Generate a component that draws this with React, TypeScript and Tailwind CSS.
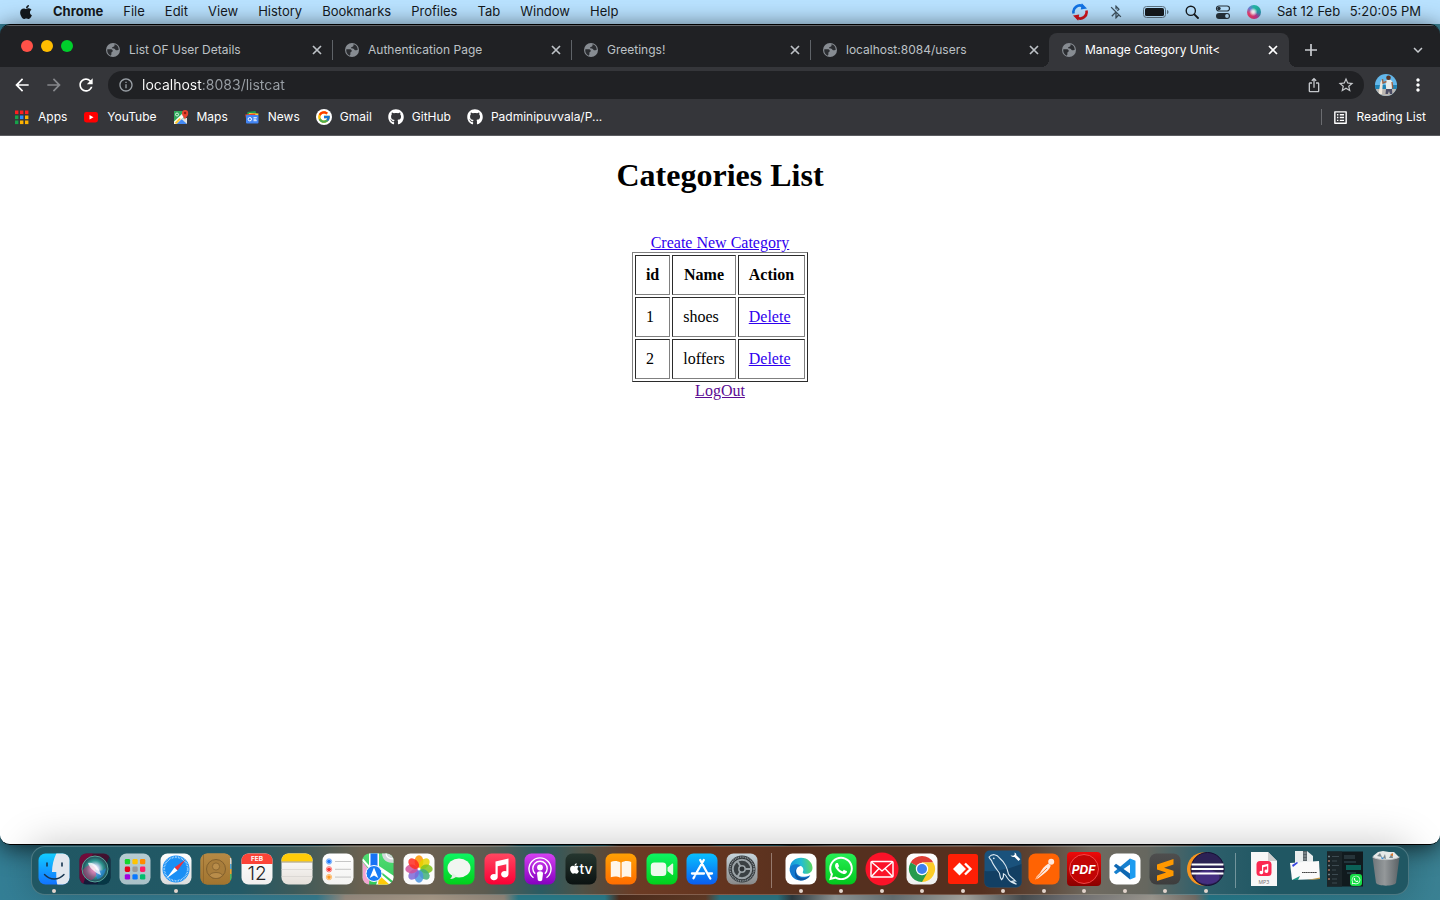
import type { ReactNode } from "react";
import { FaApple, FaGithub, FaWhatsapp } from "react-icons/fa";
import { FcGoogle } from "react-icons/fc";
import {
  MdArrowBack,
  MdArrowForward,
  MdBluetoothDisabled,
  MdExpandMore,
  MdInfoOutline,
  MdIosShare,
  MdListAlt,
  MdMoreVert,
  MdRefresh,
  MdStarBorder,
} from "react-icons/md";

/* ---------- menu bar ---------- */

const menus = ["File", "Edit", "View", "History", "Bookmarks", "Profiles", "Tab", "Window", "Help"];

function SyncIcon() {
  return (
    <svg viewBox="0 0 18 18" className="size-[18px]" fill="none" strokeWidth="2.6">
      <path d="M2.6 10.5A6.4 6.4 0 0 1 12 3.4" stroke="#1173e6" />
      <path d="M10.8.2 16 5.6l-6.2.9z" fill="#1173e6" />
      <path d="M15.4 7.5A6.4 6.4 0 0 1 6 14.6" stroke="#d3141c" />
      <path d="M7.2 17.8 2 12.4l6.2-.9z" fill="#d3141c" />
    </svg>
  );
}

function BatteryIcon() {
  return (
    <svg viewBox="0 0 26 12" className="h-3 w-[26px]">
      <rect x=".5" y=".5" width="22" height="11" rx="3" fill="none" stroke="#5c7383" />
      <rect x="2" y="2" width="19" height="8" rx="1.6" fill="#15191d" />
      <path d="M24 4v4c1-.3 1.5-1 1.5-2s-.5-1.7-1.5-2z" fill="#5c7383" />
    </svg>
  );
}

function SearchGlyph() {
  return (
    <svg viewBox="0 0 14 14" className="size-3.5" fill="none" stroke="#15191d" strokeLinecap="round">
      <circle cx="5.8" cy="5.8" r="4.6" strokeWidth="1.4" />
      <path d="M9.3 9.3 13 13" strokeWidth="1.8" />
    </svg>
  );
}

function ControlCenterIcon() {
  return (
    <svg viewBox="0 0 16 14" className="h-3.5 w-4">
      <rect x="1.5" y="1" width="13" height="5" rx="2.5" fill="none" stroke="#26323b" strokeWidth="1.2" />
      <circle cx="4" cy="3.5" r="1.7" fill="#26323b" />
      <rect x="1" y="8" width="14" height="6" rx="3" fill="#26323b" />
      <circle cx="12" cy="11" r="1.9" fill="#b9e2ff" />
    </svg>
  );
}

function SiriMini() {
  return (
    <span className="size-3.5 rounded-full bg-[radial-gradient(circle_at_45%_50%,#ffffff_0%,#ffffffcc_16%,transparent_40%),conic-gradient(from_0deg,#21b8a8,#1fae9c,#2f8fb0,#d0349a,#ee3f72,#ee3f72,#6a7fd8,#21b8a8)]" />
  );
}

function MenuBar() {
  return (
    <header className="flex h-6 shrink-0 items-center justify-between bg-[#b9e2ff] px-[19px] text-[13px] text-[#15191d]">
      <nav className="flex items-center gap-5">
        <button type="button" aria-label="Apple menu" className="flex w-3.5 justify-center">
          <FaApple className="size-4" />
        </button>
        <button type="button" className="font-bold">
          Chrome
        </button>
        {menus.map((m) => (
          <button type="button" key={m}>
            {m}
          </button>
        ))}
      </nav>
      <div className="flex items-center gap-4">
        <SyncIcon />
        <span className="flex w-[22px] justify-center">
          <MdBluetoothDisabled className="size-4 text-[#3f5361]" />
        </span>
        <BatteryIcon />
        <SearchGlyph />
        <ControlCenterIcon />
        <SiriMini />
        <time className="flex w-36 justify-between whitespace-nowrap">
          <span>Sat 12 Feb</span>
          <span>5:20:05 PM</span>
        </time>
      </div>
    </header>
  );
}

/* ---------- browser chrome ---------- */

const tabs = ["List OF User Details", "Authentication Page", "Greetings!", "localhost:8084/users", "Manage Category Unit<"];

function Globe() {
  return (
    <svg viewBox="0 0 14 14" className="size-3.5 shrink-0">
      <circle cx="7" cy="7" r="7" fill="#878c92" />
      <path
        d="M1.3 6.300h3.300c1.300 0 2 .6 2.200 1.500.1.900-.9 1-1.300 1.600-.4.700.2 1.300-.2 2.300l-.6 1A6 6 0 0 1 1.300 6.300z M8.600 1.300c-.3 1.200.3 1.500-.6 2.200-.8.500-1.900.3-1.900 1.300 0 1.100 1.500.8 2.300.9.900.1.800 1.300 1.700 1.500.9.200 1.300-.4 2.600-.2a5.800 5.800 0 0 0-4.100-5.700z"
        fill="#2b2d31"
      />
    </svg>
  );
}

function CloseGlyph() {
  return (
    <svg viewBox="0 0 16 16" className="size-4" fill="none" stroke="currentColor" strokeWidth="1.7">
      <path d="m4 4 8 8M12 4l-8 8" />
    </svg>
  );
}

function PlusGlyph() {
  return (
    <svg viewBox="0 0 16 16" className="size-4" fill="none" stroke="currentColor" strokeWidth="1.7">
      <path d="M8 2v12M2 8h12" />
    </svg>
  );
}

function TabStrip() {
  return (
    <div className="flex h-[42px] items-end border-t border-[#626366] bg-[#202124] text-[12px]">
      <div className="mb-[15px] flex w-[93px] shrink-0 gap-2 pl-[21px]">
        <button type="button" aria-label="Close window" className="size-3 rounded-full bg-[#ff5148]" />
        <button type="button" aria-label="Minimise window" className="size-3 rounded-full bg-[#ffbd00]" />
        <button type="button" aria-label="Zoom window" className="size-3 rounded-full bg-[#00cf2c]" />
      </div>
      <div role="tablist" className="flex min-w-0">
        {tabs.map((title, i) => {
          const active = i === tabs.length - 1;
          return (
            <div
              key={title}
              className={
                active
                  ? "relative flex h-[34px] w-60 min-w-0 items-center rounded-t-lg bg-[#35363a] pr-2 pl-[13px] text-white"
                  : "relative flex h-[34px] w-[239px] min-w-0 items-center pr-[7px] pl-[13px] text-[#bdc1c6]"
              }
            >
              <button type="button" role="tab" aria-selected={active} className="flex min-w-0 flex-1 items-center gap-[9px] text-left">
                <Globe />
                <span className="truncate">{title}</span>
              </button>
              <button type="button" aria-label={`Close ${title}`} className="flex size-4 items-center justify-center">
                <CloseGlyph />
              </button>
              {i < tabs.length - 2 && <span className="absolute top-[7px] -right-px h-5 w-px bg-[#5f6368]" />}
              {active && (
                <>
                  <span className="absolute bottom-0 -left-2 size-2 bg-[radial-gradient(circle_at_0_0,transparent_8px,#35363a_8px)]" />
                  <span className="absolute -right-2 bottom-0 size-2 bg-[radial-gradient(circle_at_100%_0,transparent_8px,#35363a_8px)]" />
                </>
              )}
            </div>
          );
        })}
      </div>
      <button type="button" aria-label="New tab" className="ml-[6px] flex h-[34px] w-8 items-center justify-center text-[#c9ccd0]">
        <PlusGlyph />
      </button>
      <button type="button" aria-label="Search tabs" className="mr-[6px] ml-auto flex h-[34px] w-8 items-center justify-center text-[#c9ccd0]">
        <MdExpandMore className="size-[18px]" />
      </button>
    </div>
  );
}

function IconButton({ label, children }: { label: string; children: ReactNode }) {
  return (
    <button type="button" aria-label={label} className="flex size-8 shrink-0 items-center justify-center">
      {children}
    </button>
  );
}

function Avatar() {
  return (
    <svg viewBox="0 0 22 22" className="size-[22px] rounded-full">
      <rect width="22" height="22" fill="#63b7ea" />
      <rect y="11" width="22" height="5" fill="#1f83b5" />
      <rect y="15" width="22" height="7" fill="#b9b5b0" />
      <path d="M3.500 20 5.500 8l2-3 .5 1-1 14z" fill="#eee6da" />
      <path d="m10.500 7 1.500-1h4l1.500 2-.8 7.500h-5.500z" fill="#e9ece9" />
      <path d="M11.500 7.500 8 9 7.500 5M17 8l.8 6.500" stroke="#9b6245" strokeWidth="1.400" fill="none" />
      <circle cx="13.500" cy="3.800" r="2.300" fill="#5a3423" />
      <path d="M11 15h6l.3 5h-2.300l-1-3-1.200 3h-2.300z" fill="#4b4c63" />
    </svg>
  );
}

function Toolbar() {
  return (
    <div className="flex h-9 items-center bg-[#35363a] px-[6px] text-white">
      <IconButton label="Back">
        <MdArrowBack className="size-5" />
      </IconButton>
      <span className="text-[#85878b]">
        <IconButton label="Forward">
          <MdArrowForward className="size-5" />
        </IconButton>
      </span>
      <IconButton label="Reload">
        <MdRefresh className="size-5" />
      </IconButton>
      <div className="mx-[6px] flex h-7 min-w-0 flex-1 items-center rounded-full bg-[#202124] pr-[2px] pl-2">
        <button type="button" aria-label="Site information" className="mr-[6px] flex w-5 shrink-0 justify-center text-[#9aa0a6]">
          <MdInfoOutline className="size-4" />
        </button>
        <input
          aria-label="Address and search bar"
          defaultValue="localhost:8083/listcat"
          className="h-7 min-w-0 flex-1 bg-[linear-gradient(to_right,#ffffff_61px,#9aa0a6_61px)] bg-clip-text pb-[2px] text-[14px] text-transparent outline-none"
        />
        <span className="flex text-[#c4c7cb]">
          <IconButton label="Share this page">
            <MdIosShare className="size-4" />
          </IconButton>
          <IconButton label="Bookmark this tab">
            <MdStarBorder className="size-[18px]" />
          </IconButton>
        </span>
      </div>
      <IconButton label="Profile">
        <Avatar />
      </IconButton>
      <IconButton label="Browser menu">
        <MdMoreVert className="size-5" />
      </IconButton>
    </div>
  );
}

const appCells = ["#ff1f1f", "#ff1f1f", "#ff1f1f", "#16a34a", "#2f8cff", "#ffb300", "#16a34a", "#ffb300", "#ffb300"];

function AppsIcon() {
  return (
    <svg viewBox="0 0 16 16" className="size-4">
      {appCells.map((c, i) => (
        <rect key={i} x={1 + (i % 3) * 5} y={1.5 + Math.floor(i / 3) * 5} width="3.400" height="3.600" fill={c} />
      ))}
    </svg>
  );
}

function YouTubeIcon() {
  return (
    <svg viewBox="0 0 16 16" className="size-4">
      <rect x="1" y="3" width="14" height="10.500" rx="2.400" fill="#ff0000" />
      <path d="M6.500 6v4.600l4-2.300z" fill="#fff" />
    </svg>
  );
}

function MapsIcon() {
  return (
    <svg viewBox="0 0 16 16" className="size-4">
      <path d="M1 2h12v13H1z" fill="#2fa85a" />
      <path d="M3.500 15 8.500 9l5.500 6z" fill="#4389f5" />
      <path d="M1 12.500 10.500 3.500l1.500 3.500L3.500 15H1z" fill="#fbfbfb" />
      <path d="m8 9.500 6 5.500V9z" fill="#e4e4e4" />
      <path d="m1.500 14 5-5 1.500 1-4.500 5z" fill="#fdc72f" />
      <circle cx="4" cy="5.500" r="1.500" fill="none" stroke="#fff" strokeWidth=".8" />
      <path d="M12 11c0-2.500-3-3.400-3-6.800a3.100 3.100 0 0 1 6.200 0C15.200 7.600 12 8.500 12 11z" fill="#e8432f" />
      <circle cx="12.100" cy="4" r="1.200" fill="#8c1f14" />
    </svg>
  );
}

function NewsIcon() {
  return (
    <svg viewBox="0 0 16 16" className="size-4">
      <path d="m3.500 3 8-1 1 4H3z" fill="#1e9e4a" />
      <path d="m5 4 9.500.5-.8 5H4z" fill="#fcc934" />
      <path d="m1.200 5.500 10-1 .5 5H2z" fill="#e8432f" />
      <rect x="2" y="6" width="12.500" height="8.500" rx="1" fill="#4285f4" />
      <circle cx="5.800" cy="10.200" r="1.700" fill="none" stroke="#fff" />
      <path d="M9.500 8.700h3.300M9.500 10.200h2.800M9.500 11.700h3.300" stroke="#fff" strokeWidth=".9" />
    </svg>
  );
}

const bookmarks: { label: string; icon: ReactNode }[] = [
  { label: "Apps", icon: <AppsIcon /> },
  { label: "YouTube", icon: <YouTubeIcon /> },
  { label: "Maps", icon: <MapsIcon /> },
  { label: "News", icon: <NewsIcon /> },
  {
    label: "Gmail",
    icon: (
      <span className="flex size-4 items-center justify-center rounded-full bg-white">
        <FcGoogle className="size-3.5" />
      </span>
    ),
  },
  { label: "GitHub", icon: <FaGithub className="size-4" /> },
  { label: "Padminipuvvala/P...", icon: <FaGithub className="size-4" /> },
];

function BookmarksBar() {
  return (
    <div className="border-b border-[#5b5c60] bg-[#35363a] px-[14px] pb-1 text-[12px] text-white">
      <nav className="flex h-7 items-center gap-4">
        {bookmarks.map((b) => (
          <a key={b.label} href="#" className="flex items-center gap-2 whitespace-nowrap">
            {b.icon}
            {b.label}
          </a>
        ))}
        <button type="button" className="ml-auto flex h-4 items-center gap-2 border-l border-[#6b6c70] pl-[10px] whitespace-nowrap">
          <MdListAlt className="size-[17px]" />
          Reading List
        </button>
      </nav>
    </div>
  );
}

/* ---------- page ---------- */

const categories = [
  { id: 1, name: "shoes" },
  { id: 2, name: "loffers" },
];

const cell = "border border-t-[#2b2b2b] border-r-[#808080] border-b-[#808080] border-l-[#2b2b2b] p-[10px]";
const link = "text-[#2f00ee] underline";

function CategoriesPage() {
  return (
    <main className="flex flex-1 flex-col items-center bg-white pt-[21px] font-['Liberation_Serif',serif] text-[16px] leading-[18px] text-black">
      <h1 className="mb-10 text-[32px] leading-[37px] font-bold">Categories List</h1>
      <a href="#" className={link}>
        Create New Category
      </a>
      <table className="border-separate border-spacing-[2px] border border-t-[#808080] border-r-[#2b2b2b] border-b-[#2b2b2b] border-l-[#808080]">
        <thead>
          <tr>
            <th className={cell}>id</th>
            <th className={cell}>Name</th>
            <th className={cell}>Action</th>
          </tr>
        </thead>
        <tbody>
          {categories.map((c) => (
            <tr key={c.id}>
              <td className={cell}>{c.id}</td>
              <td className={cell}>{c.name}</td>
              <td className={cell}>
                <a href="#" className={link}>
                  Delete
                </a>
              </td>
            </tr>
          ))}
        </tbody>
      </table>
      <a href="#" className="text-[#5b0b92] underline">
        LogOut
      </a>
    </main>
  );
}

/* ---------- dock ---------- */

function Tile({ id, from, to, children }: { id: string; from: string; to: string; children?: ReactNode }) {
  return (
    <svg viewBox="0 0 32 32" className="size-8 shrink-0 overflow-visible">
      <defs>
        <linearGradient id={id} x1="0" y1="0" x2="0" y2="1">
          <stop offset="0" stopColor={from} />
          <stop offset="1" stopColor={to} />
        </linearGradient>
        <clipPath id={`${id}-clip`}>
          <rect x=".5" y=".5" width="31" height="31" rx="7" />
        </clipPath>
      </defs>
      <rect x=".5" y=".5" width="31" height="31" rx="7" fill={`url(#${id})`} />
      <g clipPath={`url(#${id}-clip)`}>{children}</g>
    </svg>
  );
}

function Free({ children }: { children: ReactNode }) {
  return (
    <svg viewBox="0 0 32 32" className="size-8 shrink-0 overflow-visible">
      {children}
    </svg>
  );
}

const launchpad = ["#15d52c", "#ffc400", "#ff8a00", "#e8001c", "#9a9a9a", "#ff1d68", "#a100e0", "#0a78ff", "#00bd6d"];
const petals = ["#ff9500", "#e6d200", "#7fc41c", "#3fae7a", "#4a94e0", "#7d68d8", "#d0509a", "#ff2a20"];

type DockApp = { name: string; running?: boolean; icon: ReactNode };

const systemApps: DockApp[] = [
  {
    name: "Finder",
    running: true,
    icon: (
      <Tile id="finder" from="#12cdff" to="#1273ff">
        <path d="M18.500 0H32v32H19.500c-1-3.500-1.300-6.500-1.200-13H14C14 13 15.500 6 18.500 0z" fill="#e2e7ee" />
        <path d="M9 10v3M24 10v3" stroke="#16344f" strokeWidth="1.600" strokeLinecap="round" />
        <path d="M6.500 21.500c5.500 6 14 6 19.500 0" fill="none" stroke="#16344f" strokeWidth="1.400" strokeLinecap="round" />
      </Tile>
    ),
  },
  {
    name: "Siri",
    icon: (
      <Tile id="siri" from="#45102f" to="#101c3a">
        <defs>
          <radialGradient id="siri-orb">
            <stop offset="0" stopColor="#ffffff" />
            <stop offset=".3" stopColor="#c9d4f0" />
            <stop offset=".65" stopColor="#2a938d" />
            <stop offset="1" stopColor="#24404f" />
          </radialGradient>
        </defs>
        <path d="M0 0h14L4 32H0z" fill="#86093f" opacity=".7" />
        <path d="M32 0v32H18z" fill="#033e49" opacity=".8" />
        <circle cx="16" cy="16" r="13" fill="url(#siri-orb)" />
        <path d="M4 17c5-7 10-6 13-1 2 5-1 10-5 11-5-1-8-5-8-10z" fill="#d12c72" opacity=".5" />
        <path d="M16 16c4 3 8 2 11-1-1 7-5 11-9 11z" fill="#267fe2" opacity=".6" />
        <path d="M9 10c6-1 10 3 13 12-5-2-11-6-13-12z" fill="#fff" opacity=".75" />
        <circle cx="16" cy="16" r="13" fill="none" stroke="#63c0ad" strokeWidth=".8" />
      </Tile>
    ),
  },
  {
    name: "Launchpad",
    icon: (
      <Tile id="launchpad" from="#b7ccd2" to="#a9c0c7">
        {launchpad.map((c, i) => (
          <rect key={i} x={5.8 + (i % 3) * 7.6} y={6 + Math.floor(i / 3) * 7.6} width="5.300" height="5.300" rx="1.300" fill={c} />
        ))}
      </Tile>
    ),
  },
  {
    name: "Safari",
    running: true,
    icon: (
      <Tile id="safari" from="#ffffff" to="#dcdcdc">
        <circle cx="16" cy="16" r="13.500" fill="#1a8ff5" />
        <circle cx="16" cy="16" r="11.800" fill="none" stroke="#d7efff" strokeWidth="1.800" strokeDasharray=".6 .95" />
        <path d="M25.500 6.500 14.500 14.500l3 3z" fill="#f0323a" />
        <path d="M6.500 25.500 14.500 14.500l3 3z" fill="#fff" />
      </Tile>
    ),
  },
  {
    name: "Contacts",
    icon: (
      <Tile id="contacts" from="#b68a45" to="#a1742f">
        <rect x="29" y="5" width="3" height="6" fill="#d8d8d8" />
        <rect x="29" y="11" width="3" height="5" fill="#52a9da" />
        <rect x="29" y="16" width="3" height="5" fill="#e8a233" />
        <rect x="29" y="21" width="3" height="6" fill="#49b866" />
        <rect x="0" y="0" width="30" height="32" rx="6" fill="url(#contacts)" />
        <path d="M3.500 0v32" stroke="#8f652a" strokeWidth=".8" />
        <circle cx="16" cy="16" r="9.500" fill="#a87d3b" stroke="#82602e" />
        <circle cx="16" cy="13.500" r="3.600" fill="#b98d4a" stroke="#82602e" strokeWidth=".8" />
        <path d="M9.500 22.500c1-4 12-4 13 0-3.500 4-9.500 4-13 0z" fill="#b98d4a" stroke="#82602e" strokeWidth=".8" />
      </Tile>
    ),
  },
  {
    name: "Calendar",
    icon: (
      <Tile id="calendar" from="#ffffff" to="#f1efee">
        <rect width="32" height="11" fill="#fc4438" />
        <text x="16" y="8.300" textAnchor="middle" fontSize="6.500" fontWeight="bold" fill="#fff">FEB</text>
        <text x="16" y="26.500" textAnchor="middle" fontSize="19" fontWeight="300" fill="#252525">12</text>
      </Tile>
    ),
  },
  {
    name: "Notes",
    icon: (
      <Tile id="notes" from="#ffffff" to="#e5e0da">
        <rect width="32" height="8.500" fill="#ffcc08" />
        <path d="M0 9h32" stroke="#8c7d52" strokeWidth=".8" />
        <path d="M0 16.500h32M0 23.500h32" stroke="#d5d2ce" strokeWidth=".7" />
      </Tile>
    ),
  },
  {
    name: "Reminders",
    icon: (
      <Tile id="reminders" from="#ffffff" to="#f3f3f1">
        {["#1b7bff", "#ff3434", "#ff9820"].map((c, i) => (
          <g key={c}>
            <circle cx="7" cy={8.5 + i * 7.8} r="2.700" fill="none" stroke={c} strokeWidth=".6" />
            <circle cx="7" cy={8.5 + i * 7.8} r="1.900" fill={c} />
            <path d={["M13 8.500h16", "M13 16.300h16", "M13 24.100h16"][i]} stroke="#bfbfbf" strokeWidth=".9" />
          </g>
        ))}
      </Tile>
    ),
  },
  {
    name: "Maps",
    icon: (
      <Tile id="maps" from="#50dc72" to="#33c85b">
        <path d="M0 8 8 18l-1 14H0z" fill="#f3a4d1" />
        <path d="M7 0h10v20H7z" fill="#fff" />
        <path d="M8.500 0h7v20h-7z" fill="#1672f4" />
        <path d="M18 20 32 32H14z" fill="#fff" />
        <path d="m17 22 11 10H16z" fill="#ffca0a" />
        <path d="m17 13 15 10v6L17 17z" fill="#fff" />
        <path d="M20 0c0 7 5 10 12 10V0z" fill="#d3d8da" />
        <path d="M24 0c0 4 3 6 8 6" fill="none" stroke="#fff" strokeWidth="1.200" />
        <path d="M0 6 8 15" stroke="#fff" strokeWidth="2" />
        <circle cx="12" cy="20.500" r="8" fill="#187cf5" stroke="#fff" />
        <path d="m12 14.500 4.300 10.500-4.300-2.600L7.700 25z" fill="#fff" />
      </Tile>
    ),
  },
  {
    name: "Photos",
    icon: (
      <Tile id="photos" from="#ffffff" to="#fafafa">
        {petals.map((c, i) => (
          <ellipse key={c} cx="16" cy="8.500" rx="4.400" ry="6.200" fill={c} opacity=".85" transform={`rotate(${i * 45} 16 16)`} />
        ))}
      </Tile>
    ),
  },
  {
    name: "Messages",
    icon: (
      <Tile id="messages" from="#0df562" to="#02cf1b">
        <ellipse cx="16" cy="15" rx="11.500" ry="9.500" fill="#f1f6f1" />
        <path d="M9 20c.5 3-.5 5-2 6 3 0 5-1 7-3z" fill="#e3eee3" />
      </Tile>
    ),
  },
  {
    name: "Music",
    icon: (
      <Tile id="music" from="#ff4761" to="#fb0035">
        <path d="M11.500 8.500 24.500 5.500v15.800a3.700 3.200 0 1 1-2.200-3v-7L13.700 13.200v11a3.700 3.200 0 1 1-2.200-3z" fill="#fff" />
      </Tile>
    ),
  },
  {
    name: "Podcasts",
    icon: (
      <Tile id="podcasts" from="#d440f2" to="#8500bf">
        <g fill="none" stroke="#fff" strokeWidth="1.400">
          <path d="M9.500 24.700a11 11 0 1 1 13 0" />
          <path d="M11.200 20.800a7.200 7.200 0 1 1 9.600 0" />
        </g>
        <circle cx="16" cy="14.500" r="2.900" fill="#fff" />
        <path d="M13 20.500c0-3 6-3 6 0L18.200 27c-.3 1.500-4.100 1.500-4.400 0z" fill="#fff" />
      </Tile>
    ),
  },
  {
    name: "TV",
    icon: (
      <Tile id="tv" from="#25362f" to="#0b1211">
        <FaApple x="3.500" y="9.500" size="12" color="#fff" />
        <text x="14.500" y="21" fontSize="14" fontWeight="500" fill="#fff">tv</text>
      </Tile>
    ),
  },
  {
    name: "Books",
    icon: (
      <Tile id="books" from="#ffa004" to="#ff6d00">
        <path d="M15.400 9.500C13 7.800 8.500 7.500 5.800 9v15.300c3-1.300 7-1.200 9.600.5zM16.600 9.500c2.400-1.700 6.900-2 9.600-.5v15.300c-3-1.300-7-1.200-9.600.5z" fill="#fff6ea" />
      </Tile>
    ),
  },
  {
    name: "FaceTime",
    icon: (
      <Tile id="facetime" from="#0df562" to="#02cf1b">
        <rect x="4.800" y="9.500" width="15.500" height="13.500" rx="3.500" fill="#eefaee" />
        <path d="m21.500 14.500 4.500-3.700c.6-.4 1.200-.2 1.200.6v9.700c0 .8-.6 1-1.200.6l-4.500-3.700z" fill="#e4f6e4" />
      </Tile>
    ),
  },
  {
    name: "App Store",
    icon: (
      <Tile id="appstore" from="#08c0ff" to="#0b5df0">
        <g stroke="#fff" strokeWidth="2.300" strokeLinecap="round" fill="none">
          <path d="m17.800 7-8.300 14.500M14.200 7l8.900 16.500 1.200 2M6 20.500h12M22.500 20.500H26M8.500 23.500l-1 1.700" />
        </g>
      </Tile>
    ),
  },
  {
    name: "System Preferences",
    icon: (
      <Tile id="settings" from="#c5d4db" to="#898989">
        <circle cx="16" cy="16" r="13.500" fill="#33383b" />
        <circle cx="16" cy="16" r="12" fill="none" stroke="#8b9398" strokeWidth="1.600" strokeDasharray="1 .8" />
        <circle cx="16" cy="16" r="9.300" fill="#3a4043" stroke="#9aa2a6" strokeWidth="2" />
        <path d="M17.500 16H25M15.200 14.700 11.500 8.200M15.200 17.300l-3.700 6.500" stroke="#9aa2a6" strokeWidth="1.900" />
        <circle cx="16" cy="16" r="3.200" fill="#2c3134" stroke="#9aa2a6" strokeWidth="1.500" />
      </Tile>
    ),
  },
];

const userApps: DockApp[] = [
  {
    name: "Microsoft Edge",
    running: true,
    icon: (
      <Tile id="edge" from="#ffffff" to="#ffffff">
        <defs>
          <linearGradient id="edge-a" x1="0" y1=".3" x2="1" y2=".2">
            <stop offset="0" stopColor="#1596dc" />
            <stop offset=".5" stopColor="#22bdd3" />
            <stop offset="1" stopColor="#62da55" />
          </linearGradient>
        </defs>
        <path d="M4.800 15C5.500 8.500 10 4.800 16 4.800c7 0 11.500 5 11.500 10 0 4-3 6-6.500 6-2.500 0-4-.8-3-2.400 1.200-2.500-.5-6-4.500-6-5 0-8 3-8.700 6.600z" fill="url(#edge-a)" />
        <path d="M4.800 15c1.500-4 8-5 11-2-3.300.5-5 3-4.500 6 .7 4 6 6.800 14 3.200C23 26 19.500 27.500 16 27.500 8.500 27.500 4.300 21.500 4.800 15z" fill="#1379cf" />
        <path d="M12 14.500c-2 3-1.500 8 3 10 3 1.400 7 .5 10.300-2.300C22.500 26 19 27.500 15.500 27.500 10 26.500 8 19 12 14.500z" fill="#0f54a0" />
      </Tile>
    ),
  },
  {
    name: "WhatsApp",
    running: true,
    icon: (
      <Tile id="whatsapp" from="#27ef56" to="#02c71c">
        <FaWhatsapp x="2.500" y="2" size="27" color="#fff" />
      </Tile>
    ),
  },
  {
    name: "Mail",
    running: true,
    icon: (
      <Free>
        <circle cx="16" cy="16" r="16.500" fill="#fb1228" />
        <g fill="none" stroke="#fff" strokeWidth="1.400" strokeLinejoin="round">
          <rect x="5" y="8.500" width="22" height="15.500" rx="1" />
          <path d="m5.500 9 10.500 9L26.500 9M5.500 23.500l7.500-8M26.500 23.500l-7.500-8" />
        </g>
      </Free>
    ),
  },
  {
    name: "Chrome",
    running: true,
    icon: (
      <Tile id="chrome" from="#ffffff" to="#efefef">
        <path d="M16 16 4.700 9.500A13 13 0 0 1 27.300 9.500H16z" fill="#df3e35" />
        <path d="M16 16V9.500h11.300A13 13 0 0 1 16 29z" fill="#fccc28" />
        <path d="M16 16 4.700 9.500A13 13 0 0 0 16 29l5.600-9.700z" fill="#259b4d" />
        <circle cx="16" cy="16" r="6.200" fill="#fff" />
        <circle cx="16" cy="16" r="5" fill="#3f80ee" />
      </Tile>
    ),
  },
  {
    name: "AnyDesk",
    running: true,
    icon: (
      <Free>
        <rect x="1" y="1" width="30" height="30" rx="2.500" fill="#ff1f05" />
        <path d="m12.500 9.500 6.500 6.500-6.500 6.500L6 16z" fill="#fff" />
        <path d="m18 10.500 5.500 5.500-5.500 5.500" fill="none" stroke="#fff" strokeWidth="2.400" />
      </Free>
    ),
  },
  {
    name: "MySQL Workbench",
    running: true,
    icon: (
      <Free>
        <rect x="-2.500" y="-2.500" width="37" height="37" rx="5" fill="#1a527c" />
        <path d="M-2.500 18c12 1 24-2 37-7v18a5 5 0 0 1-5 5h-27a5 5 0 0 1-5-5z" fill="#123f63" />
        <path
          d="M2 4c3-3.500 8-3 10.500 1 6 5 7.500 10 9 16 .7 2.500 4 3.500 7 7-2-.3-3 0-3.500.2 1.500 1 3 2 4.500 3-4-1-7-3-9-6-1-2-2-4-4-4.500.2 2 0 4.500-2 6-1.500-1.500-1.500-4-2-6.500C9.500 16 6 12 4.500 7.500 3.500 6.500 2.500 5.500 2 4z"
          fill="none"
          stroke="#dce9f2"
          strokeWidth="1.100"
        />
        <circle cx="6.800" cy="5.300" r=".9" fill="#dce9f2" />
        <path d="M23.500 2.500c1.500 1.500 3 1.700 4 1.500l4 4 1.800-1.800-4-4C29.500 1 29 0 27.500-.5l.3 2-1.500 1.200z" fill="#fff" />
      </Free>
    ),
  },
  {
    name: "Postman",
    running: true,
    icon: (
      <Tile id="postman" from="#ff6303" to="#ff6303">
        <circle cx="23.200" cy="8.800" r="3" fill="#ffe8dc" />
        <path d="m20.500 10.500 2.300 2.300c-1.500 4-4.500 6.500-8 9l-4.500 3.500-3.500 1.500 2-3.500 3-3c2-4 4.700-7.300 8.700-9.800z" fill="#ffe8dc" />
        <path d="m7 26.500 12-11.500" stroke="#ff6303" strokeWidth=".8" />
      </Tile>
    ),
  },
  {
    name: "PDF Reader",
    running: true,
    icon: (
      <Free>
        <defs>
          <linearGradient id="pdf" x1="0" y1="0" x2="0" y2="1">
            <stop offset="0" stopColor="#ee0a0a" />
            <stop offset="1" stopColor="#8a0000" />
          </linearGradient>
        </defs>
        <rect x="-1" y="-1" width="34" height="34" rx="4" fill="url(#pdf)" />
        <circle cx="16" cy="16" r="14.500" fill="#c20505" stroke="#f55" strokeWidth=".8" />
        <text x="15.500" y="20.500" textAnchor="middle" fontSize="12" fontWeight="bold" fontStyle="italic" fill="#fff">PDF</text>
      </Free>
    ),
  },
  {
    name: "Visual Studio Code",
    running: true,
    icon: (
      <Tile id="vscode" from="#ffffff" to="#ffffff">
        <path d="m21 5.500 5.500 2.300v16.400L21 26.500z" fill="#1c9cf0" />
        <path d="M21 5.500 4.800 19l2.200 2.300L21 11.500z" fill="#1780cf" />
        <path d="M21 26.500 4.800 13 7 10.700l14 9.800z" fill="#0f68b3" />
      </Tile>
    ),
  },
  {
    name: "Sublime Text",
    running: true,
    icon: (
      <Tile id="sublime" from="#4e4e4e" to="#3d3d3d">
        <path d="M8 11.500 24.500 6v5.500L15 14.700l9.500 3.100v4.900L8 28v-5.500l9.200-3L8 16.500z" fill="#ff9800" />
      </Tile>
    ),
  },
  {
    name: "Eclipse",
    running: true,
    icon: (
      <Free>
        <circle cx="13.500" cy="16" r="16.500" fill="#f7941e" />
        <circle cx="17.500" cy="16" r="16.500" fill="#2c2255" stroke="#160d33" />
        <ellipse cx="17.500" cy="24" rx="12" ry="7" fill="#513698" opacity=".65" />
        <path d="M1.500 11.500h32M1.500 16h32M1.500 20.500h32" stroke="#fff" strokeWidth="2" />
      </Free>
    ),
  },
];

const files: DockApp[] = [
  {
    name: "MP3 file",
    icon: (
      <Free>
        <path d="M3-1h17l9 9v25H3z" fill="#f7f7f7" />
        <path d="m20-1 9 9h-9z" fill="#cfcfcf" />
        <rect x="8.500" y="8" width="15" height="15" rx="3.500" fill="#fb2850" />
        <path d="M14 12.200 20.300 10.700v7.600a1.900 1.700 0 1 1-1.200-1.600v-3.400l-3.900 1v5.200a1.900 1.700 0 1 1-1.200-1.600z" fill="#fff" />
        <text x="16" y="30.500" textAnchor="middle" fontSize="5" fill="#777">MP3</text>
      </Free>
    ),
  },
  {
    name: "Documents",
    icon: (
      <Free>
        <path d="M6-2h12l6 5v12H6z" fill="#e9edee" />
        <path d="M14-2h4v10h-4z" fill="#566066" />
        <path d="M14.500 0h3M14.500 3h3M14.500 6h3" stroke="#aab2b6" strokeWidth=".8" />
        <path d="m1 10 29-2 1 18-28 1z" fill="#fafafa" />
        <path d="m4 14 5-4-1-1-5 3z" fill="#3544e0" />
        <path d="m3 27 8-4-2 4z" fill="#1c8f80" />
        <path d="M13 19.500h15" stroke="#444" strokeWidth="1.200" strokeDasharray="1.500 .3" />
        <path d="m18 27 13-1v-1.500z" fill="#c69c4a" />
      </Free>
    ),
  },
  {
    name: "WhatsApp window",
    icon: (
      <Free>
        <rect x="-2" y="-1.500" width="36" height="35" fill="#111a1e" />
        <rect x="-2" y="-1.500" width="15" height="35" fill="#1b2529" />
        <path d="M3 3.500h7M3 8h5M3 12.500h7M3 17h4M3 21.500h6M3 26h5M3 30h5" stroke="#3c4a51" />
        <path d="M-1 8h2M-1 17h2M-1 26h2" stroke="#a8735f" strokeWidth="1.500" />
        <path d="M-1 3.500h2M-1 12.500h2M-1 21.500h2" stroke="#6b7f88" strokeWidth="1.500" />
        <rect x="15" y="2" width="11" height="4" fill="#26343a" />
        <rect x="17" y="12" width="15" height="5" fill="#0b6157" />
        <path d="M15 9h12M18 20h9" stroke="#37505a" strokeWidth="1.200" />
        <rect x="21" y="21" width="12" height="12" rx="3" fill="#15dc45" />
        <FaWhatsapp x="22" y="22" size="10" color="#fff" />
      </Free>
    ),
  },
  {
    name: "Trash",
    icon: (
      <Free>
        <defs>
          <linearGradient id="trash" x1="0" x2="1" y1="0" y2="0">
            <stop offset="0" stopColor="#6f767a" />
            <stop offset=".45" stopColor="#94989a" />
            <stop offset="1" stopColor="#5a6165" />
          </linearGradient>
        </defs>
        <path d="m3 3 5-4 5-1 6 1h5l5 5-3 5H6z" fill="#e6e9e8" />
        <path d="m7 3 3-3 2 4zM19 5l3-5 1 5zM13 5l2-4 1 5z" fill="#7d8b8f" />
        <path d="m20 2 3-2v3z" fill="#e07a2c" />
        <path d="m11 4 3 1-2 2z" fill="#3a8ad0" />
        <path d="M2.500 4c6 3.500 21 3.500 27 0l-3.500 26c-2 3.500-18 3.500-20 0z" fill="url(#trash)" />
        <path d="M2.500 4c6 3.500 21 3.500 27 0" fill="none" stroke="#c2c7c9" />
      </Free>
    ),
  },
];

function DockItem({ app }: { app: DockApp }) {
  return (
    <button type="button" aria-label={app.name} className="flex min-w-0 flex-1 flex-col items-center gap-1">
      {app.icon}
      <span className={app.running ? "size-1 rounded-full bg-[#e3d5cd]" : "size-1"} />
    </button>
  );
}

function DockDivider() {
  return (
    <span className="flex w-[18px] shrink-0 justify-center">
      <span className="h-[35px] w-px bg-white/35" />
    </span>
  );
}

function Dock() {
  return (
    <footer className="px-[31px] pt-px pb-[5px]">
      <div className="flex rounded-[14px] border border-white/20 bg-[linear-gradient(to_right,#205763_0%,#225966_15%,#3c5a5a_19%,#6a6150_24%,#6b6151_29%,#5c5b50_33%,#2a5b62_37%,#4f5247_40%,#6c3b24_44%,#62341f_51%,#55301f_57%,#55301f_69%,#5b4435_73%,#6f6a60_77%,#66675f_81%,#2f606c_85%,#205763_90%,#205763_100%)] px-[2px] pt-[6px] pb-px shadow-[0_0_40px_rgba(0,0,0,0.25)]">
        {systemApps.map((a) => (
          <DockItem key={a.name} app={a} />
        ))}
        <DockDivider />
        {userApps.map((a) => (
          <DockItem key={a.name} app={a} />
        ))}
        <DockDivider />
        {files.map((a) => (
          <DockItem key={a.name} app={a} />
        ))}
      </div>
    </footer>
  );
}

export default function App() {
  return (
    <div className="flex min-h-screen flex-col overflow-hidden bg-[linear-gradient(to_right,#347f96_0%,#3a8498_22%,#a3978a_24%,#b5a693_30%,#9c9184_35%,#2d8494_36%,#2d8494_42%,#54301f_43%,#68402a_49%,#2f7c8a_50%,#2f7c8a_54%,#303e44_55%,#9ea5a5_58%,#6e787b_62%,#b5b4ae_67%,#4e5457_71%,#77787c_74%,#aaa69d_80%,#7d7770_83%,#287f91_84%,#3b8294_100%)] font-['Inter','Liberation_Sans',sans-serif]">
      <MenuBar />
      <section className="flex flex-1 flex-col overflow-hidden rounded-[10px] border-y border-black shadow-[0_4px_24px_rgba(0,0,0,0.7)]">
        <TabStrip />
        <Toolbar />
        <BookmarksBar />
        <CategoriesPage />
      </section>
      <Dock />
    </div>
  );
}
